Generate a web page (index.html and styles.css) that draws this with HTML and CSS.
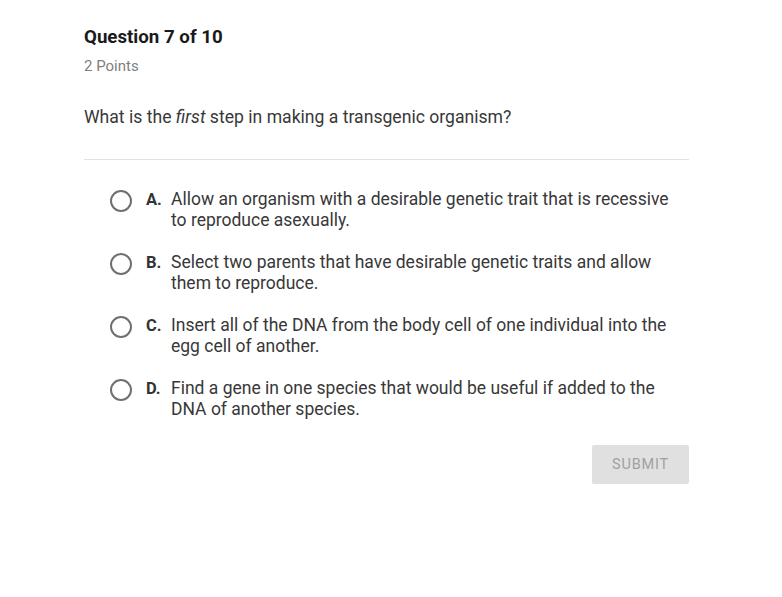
FILE: index.html
```html
<!DOCTYPE html>
<html>
<head>
<meta charset="utf-8">
<link rel="stylesheet" href="styles.css">
</head>
<body>
<main class="quiz">
  <h1 class="title">Question 7 of 10</h1>
  <div class="points">2 Points</div>
  <p class="question">What is the <em>first</em> step in making a transgenic organism?</p>
  <hr class="divider">
  <ul class="options">
    <li class="option"><span class="radio"></span><span class="letter">A.</span><span class="text">Allow an organism with a desirable genetic trait that is recessive to reproduce asexually.</span></li>
    <li class="option"><span class="radio"></span><span class="letter">B.</span><span class="text">Select two parents that have desirable genetic traits and allow them to reproduce.</span></li>
    <li class="option"><span class="radio"></span><span class="letter">C.</span><span class="text">Insert all of the DNA from the body cell of one individual into the egg cell of another.</span></li>
    <li class="option"><span class="radio"></span><span class="letter">D.</span><span class="text">Find a gene in one species that would be useful if added to the DNA of another species.</span></li>
  </ul>
  <div class="actions"><button class="submit">SUBMIT</button></div>
</main>
</body>
</html>
```
FILE: styles.css
```css
html, body { margin: 0; background: #fff; }
body { font-family: Roboto, "Noto Sans", sans-serif; color: #333; }
.quiz { width: 605px; padding: 25px 0 0 84px; }
.title { margin: 0; font-size: 18.7px; font-weight: 700; line-height: 24px; color: #1a1a1a; }
.points { margin-top: 7px; font-size: 15px; line-height: 20px; color: #808080; }
.question { margin: 30px 0 0; font-size: 17.6px; line-height: 22px; color: #383838; }
.question em { font-style: italic; }
.divider { margin: 31px 0 0; border: 0; border-top: 1px solid #e2e2e2; }
.options { list-style: none; margin: 0; padding: 29px 0 0 26px; display: flex; flex-direction: column; gap: 21px; }
.option { display: flex; align-items: flex-start; font-size: 17.5px; line-height: 21px; color: #383838; }
.radio { flex: none; width: 18px; height: 18px; border: 2px solid #707070; border-radius: 50%; margin-top: 1px; }
.letter { flex: none; width: 25px; margin-left: 14px; font-weight: 700; font-size: 16.5px; color: #333; }
.text { flex: 1; padding-right: 10px; }
.actions { display: flex; justify-content: flex-end; margin-top: 25px; }
.submit { width: 97px; height: 39px; border: 0; border-radius: 2px; background: #e0e0e0; color: #a0a0a0; font-family: Roboto, sans-serif; font-size: 14.5px; letter-spacing: 0.8px; }
```
